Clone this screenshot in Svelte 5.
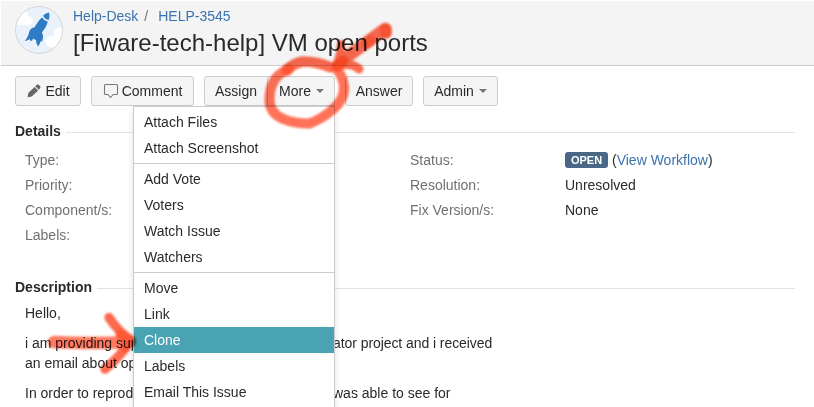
<script>
  const menu = [
    ['Attach Files', 'Attach Screenshot'],
    ['Add Vote', 'Voters', 'Watch Issue', 'Watchers'],
    ['Move', 'Link', 'Clone', 'Labels', 'Email This Issue']
  ];
  const left = ['Type:', 'Priority:', 'Component/s:', 'Labels:'];
</script>

<div class="page">
  <header>
    <svg class="avatar" width="48" height="48" viewBox="0 0 48 48">
      <defs><clipPath id="disc"><circle cx="24" cy="24" r="23.3" /></clipPath></defs>
      <circle cx="24" cy="24" r="23.5" fill="#e9f1fa" />
      <g clip-path="url(#disc)" fill="#fff">
        <path d="M0 19h15c3-1 4-6 1-8-1-1-2-1-3-1 0-3-1-5-4-5L0 3z" />
        <path d="M48 22c-4-2-9 0-9 5v3c-5-1-9 3-8 7 0 3 3 5 6 4l3 7h9z" />
      </g>
      <circle cx="24" cy="24" r="23.5" fill="none" stroke="#d3d6da" />
      <g fill="#2f7cc4">
        <path d="M34 6.500c-2.500.6-4.400 1.600-6 3.300 1.200 2.300 3.100 3.700 5.700 4.300.9-2.600 1-5.200.3-7.600z" />
        <path d="M27 11.200c-3 2.800-5.400 6.300-7.300 10-4 .8-5.200 3-5.900 6.200-.6 2.600-2 5-4 7.600 2-.3 3.600-1 4.900-2.100.2 1 .7 1.600 1.300 2.300 1-.7 1.800-1.700 2.400-2.800.8.9 1.700 1.300 2.700 1.600-.1 2.200.6 4.300 2 6.500 1.200-1.500 1.900-3.100 2.100-5 .7.200 1.400.1 2-.3.600-2.600 1.800-5.500-.4-8.500 2.700-3.400 4.900-6.600 6-11.100-2.400-.6-4.400-2.100-5.800-4.400z" />
      </g>
    </svg>
    <div class="heading">
      <nav><a href="#project">Help-Desk</a><span class="slash">/</span><a href="#issue">HELP-3545</a></nav>
      <h1>[Fiware-tech-help] VM open ports</h1>
    </div>
  </header>

  <div class="toolbar">
    <button class="edit">
      <svg width="16" height="16" viewBox="0 0 16 16" fill="#666"><path d="M1.600 14.300l.7-4.200 6.300-6.200 3.500 3.500-6.300 6.200zM9.300 3.200l1.100-1.100c.8-.8 1.900-.7 2.600 0l.9.900c.8.800.8 1.900 0 2.600l-1.100 1.100z" /></svg>Edit
    </button>
    <button class="comment">
      <svg width="16" height="16" viewBox="0 0 16 16" fill="none" stroke="#777" stroke-width="1.100"><path d="M2.500 1.500h11q1 0 1 1v8q0 1-1 1h-3.300l-2.700 3-2.700-3H2.500q-1 0-1-1v-8q0-1 1-1z" /></svg>Comment
    </button>
    <div class="group">
      <button class="assign">Assign</button>
      <button class="more">More<i></i></button>
    </div>
    <button class="answer">Answer</button>
    <button class="admin">Admin<i></i></button>
  </div>

  <section class="details">
    <h2>Details</h2>
    <div class="columns">
      <div class="labels">{#each left as label}<div class="row">{label}</div>{/each}</div>
      <dl>
        <dt>Status:</dt><dd><b>OPEN</b><span>(<a href="#workflow">View Workflow</a>)</span></dd>
        <dt>Resolution:</dt><dd>Unresolved</dd>
        <dt>Fix Version/s:</dt><dd>None</dd>
      </dl>
    </div>
  </section>

  <section class="description">
    <h2>Description</h2>
    <p>Hello,</p>
    <p><span class="start">i am providing sup</span><span class="rest">ator project and i received</span><br />an email about op</p>
    <p><span class="start">In order to reprod</span>was able to see for</p>
  </section>

  <div class="menu">
    {#each menu as group}
      <ul>
        {#each group as item}<li class:active={item === 'Clone'}>{item}</li>{/each}
      </ul>
    {/each}
  </div>

  <svg class="marks" width="814" height="407" viewBox="0 0 814 407" fill="none" stroke-linecap="round" stroke-linejoin="round">
    <defs><filter id="soft" x="-10%" y="-10%" width="120%" height="120%"><feGaussianBlur stdDeviation="0.8" /></filter></defs>
    <g filter="url(#soft)">
      <path d="M287 70C275 75 270 85 269.500 98c-.5 10 4 17 14 21 9 4 17 4.500 26 4.500 8-3 15-7 22-13 9-7 13-14 12.500-24-1-9-4-15-10-20" stroke="#ff7259" stroke-width="10" />
      <path d="M287 70q7-7 16-8.500 14 0 28 6" stroke="#ff6a50" stroke-width="10.500" />
      <path d="M385 29L340 62" stroke="#ff6c51" stroke-width="12.500" />
      <path d="M386 29v4M370 41l-3 2M287 70l1-1" stroke="#ff5434" stroke-width="11.500" />
      <path d="M341 44q0 10-4 20" stroke="#ff6a4f" stroke-width="8" />
      <path d="M338 66q13-4 21 3" stroke="#ff6a4f" stroke-width="9" />
      <path d="M337 66l6-5" stroke="#ff4c27" stroke-width="11" />
      <path d="M54 342q35 2 76 0" stroke="#ff735a" stroke-width="12.500" stroke-opacity=".95" />
      <path d="M109 317.500q9 14 22 22.500-10 16-26 29" stroke="#ff6a4f" stroke-width="9.500" />
      <path d="M120 334l10 7-5 7" stroke="#ff5836" stroke-width="9" />
    </g>
  </svg>
</div>

<style>
  :global(body) { margin: 0; background: #fff; }
  .page { position: relative; width: 814px; height: 407px; overflow: hidden; box-sizing: border-box; padding: 1px 0 0 1px; font: 14px/20px "Liberation Sans", Arial, sans-serif; color: #2a2a2a; background: #fff; }
  a { color: #3b73af; text-decoration: none; }
  header { display: flex; height: 64px; background: #f4f4f4; border-bottom: 1px solid #ccc; padding-left: 14px; }
  .avatar { margin-top: 5px; flex: none; }
  .heading { margin-left: 10px; padding-top: 5px; }
  nav { height: 20px; white-space: nowrap; }
  .slash { margin: 0 10px 0 6px; color: #707070; }
  h1 { margin: 2px 0 0; font-size: 24px; line-height: 30px; font-weight: 400; white-space: nowrap; }
  .toolbar { display: flex; gap: 10px; padding: 10px 0 0 14px; }
  button { height: 30px; box-sizing: border-box; display: flex; align-items: center; justify-content: center; padding: 0; font: inherit; color: #2a2a2a; background: #f5f5f5; border: 1px solid #ccc; border-radius: 3px; white-space: nowrap; }
  button svg { margin-right: 3px; flex: none; }
  i { border: 4px solid transparent; border-top-color: #777; border-bottom: 0; margin-left: 5px; }
  .edit { width: 66px; }
  .comment { width: 103px; }
  .group { display: flex; }
  .assign { width: 64px; border-radius: 3px 0 0 3px; }
  .more { width: 68px; margin-left: -1px; padding-left: 1px; border-radius: 0 3px 0 0; }
  .answer { width: 68px; }
  .admin { width: 75px; }
  section { padding-left: 14px; }
  h2 { display: flex; align-items: center; gap: 5px; margin: 0; width: 780px; height: 20px; font-size: 14px; line-height: 20px; }
  h2::after { content: ""; flex: 1; height: 1px; background: #e2e2e2; margin-top: 2px; }
  .details { padding-top: 15px; }
  .columns { display: flex; padding: 7px 0 0 10px; color: #707070; }
  .labels { width: 385px; }
  .row { height: 25px; line-height: 25px; }
  dl { display: grid; grid-template-columns: 155px auto; grid-auto-rows: 25px; line-height: 25px; margin: 0; }
  dd { margin: 0; color: #2a2a2a; display: flex; align-items: center; }
  b { width: 43px; height: 16px; margin: -1px 4px 0 0; border-radius: 3px; background: #4a6785; color: #fff; font-size: 11px; line-height: 16px; text-align: center; }
  .description { padding-top: 29px; }
  p { margin: 0 0 10px 10px; white-space: nowrap; }
  .description h2 { margin-bottom: 6px; }
  .start { display: inline-block; width: 308px; }
  .rest { letter-spacing: -0.07px; }
  .menu { position: absolute; left: 133px; top: 106px; width: 200px; height: 310px; background: #fff; border: 1px solid #ccc; box-shadow: 0 3px 6px rgba(0, 0, 0, .13); }
  ul { list-style: none; margin: 0; padding: 2px 0; }
  ul + ul { border-top: 1px solid #ccc; }
  li { height: 26px; line-height: 26px; padding-left: 10px; }
  .active { background: #49a3b3; color: #fff; }
  .marks { position: absolute; left: 0; top: 0; pointer-events: none; mix-blend-mode: multiply; }
</style>
